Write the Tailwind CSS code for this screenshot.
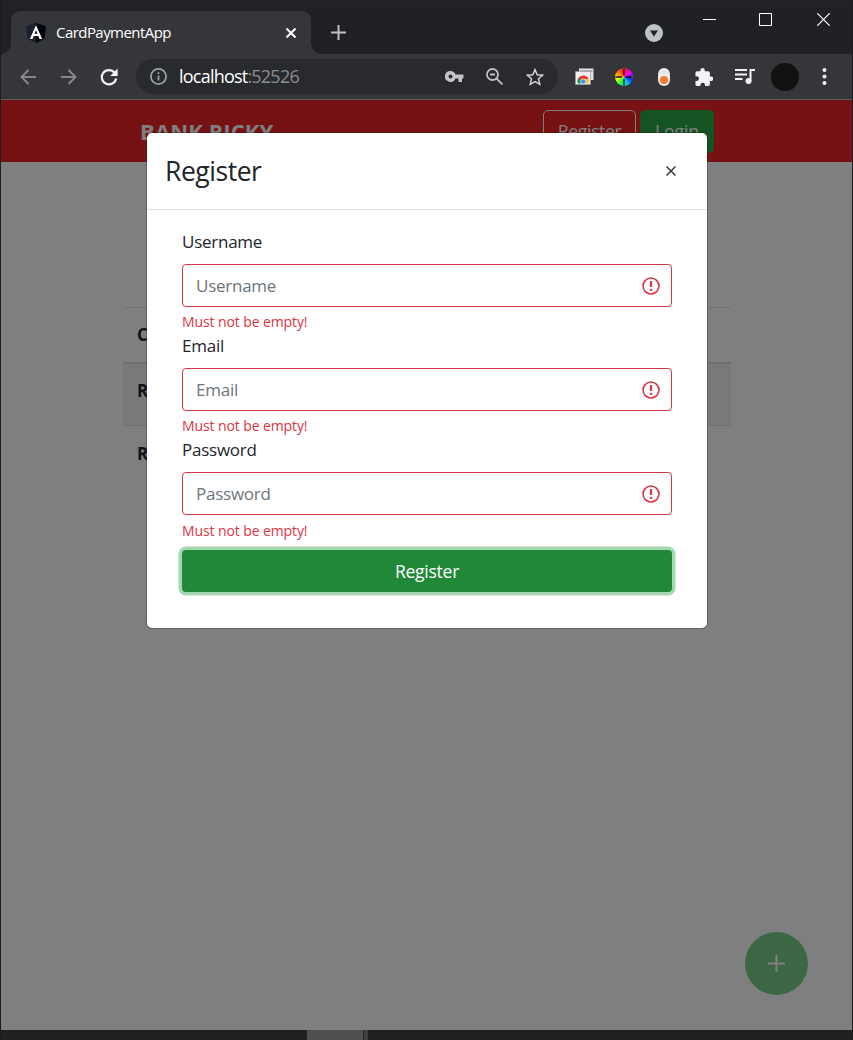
<!DOCTYPE html>
<html lang="en">
<head>
<meta charset="utf-8">
<title>CardPaymentApp</title>
<script src="https://cdn.jsdelivr.net/npm/@tailwindcss/browser@4"></script>
</head>
<body class="w-[853px] h-[1040px] overflow-hidden bg-[#202124] font-['Open_Sans',sans-serif]">
<div class="flex flex-col h-[1040px] w-[853px] border-x border-[#1b1c1e]">
  <!-- Tab strip -->
  <header class="flex h-[54px] shrink-0 border-t border-[#252624] bg-[#202124]">
    <div class="flex items-end w-[10px]"><div class="size-[10px] bg-[radial-gradient(circle_at_0_0,#202124_9.5px,#35363a_10px)]"></div></div>
    <div class="mt-[10px] flex h-[43px] w-[300px] items-center rounded-t-[9px] bg-[#35363a] pl-[15px] pr-[15px]">
      <svg class="size-5 shrink-0" viewBox="0 0 20 20"><path d="M10 0 20 3.3 18.4 16 10 20 1.6 16 0 3.3Z" fill="#1d2030"/><path d="M10 0 20 3.3 18.4 16 10 20Z" fill="#05060c"/><path fill-rule="evenodd" d="M10 2.2 3.800 16h2.700l1.200-3.100h4.600L13.500 16h2.700ZM10 7l1.500 3.700h-3Z" fill="#fff"/></svg>
      <span class="ml-[10px] grow text-[15px] tracking-[-0.55px] text-white">CardPaymentApp</span>
      <svg class="size-[10px]" viewBox="0 0 10 10" stroke="#fff" stroke-width="2"><path d="M.5.5l9 9M9.500.5l-9 9"/></svg>
    </div>
    <div class="flex items-end w-[10px]"><div class="size-[10px] bg-[radial-gradient(circle_at_100%_0,#202124_9.5px,#35363a_10px)]"></div></div>
    <svg class="ml-[10px] mt-[24px] size-[15px]" viewBox="0 0 15 15" stroke="#bdc1c6" stroke-width="2"><path d="M7.500 0v15M0 7.500h15"/></svg>
    <div class="grow"></div>
    <svg class="mt-[23px] size-[18px]" viewBox="0 0 18 18"><circle cx="9" cy="9" r="9" fill="#bdc1c6"/><path d="M5 6.500h8L9 12.500Z" fill="#202124"/></svg>
    <svg class="ml-[40px] mt-[12px] size-[13px]" viewBox="0 0 13 13" stroke="#fff"><path d="M0 6.500h13"/></svg>
    <svg class="ml-[43px] mt-[12px] size-[13px]" viewBox="0 0 13 13" stroke="#fff" fill="none"><path d="M.5.5h12v12H.5z"/></svg>
    <svg class="ml-[45px] mr-[22px] mt-[12px] size-[13px]" viewBox="0 0 13 13" stroke="#fff" stroke-width="1.200"><path d="M.3.3l12.400 12.400M12.700.3.3 12.700"/></svg>
  </header>
  <!-- Toolbar -->
  <div class="flex h-[46px] shrink-0 items-center border-b border-[#5c5d61] bg-[#35363a]">
    <svg class="ml-[19px] size-4" viewBox="0 0 16 16" fill="none" stroke="#85878b" stroke-width="2"><path d="M16 8H1.500M8.500 1 1.500 8l7 7"/></svg>
    <svg class="ml-[25px] size-4" viewBox="0 0 16 16" fill="none" stroke="#85878b" stroke-width="2"><path d="M0 8h14.500M7.500 1l7 7-7 7"/></svg>
    <svg class="ml-[23px] size-[18px]" viewBox="0 0 18 18"><path d="M14.600 4.700A7.200 7.200 0 1 0 16.100 10.500" fill="none" stroke="#f1f3f4" stroke-width="2.200"/><path d="M17.600.6v7.400h-7.400Z" fill="#f1f3f4"/></svg>
    <div class="ml-[18px] flex h-[35px] w-[422px] items-center rounded-full bg-[#292a2d] pl-[14px] pr-[14px]">
      <svg class="size-[17px]" viewBox="0 0 17 17" fill="none" stroke="#9aa0a6" stroke-width="1.700"><circle cx="8.500" cy="8.500" r="7.600"/><path d="M8.500 7.500v5M8.500 4.300V6"/></svg>
      <span class="ml-[12px] grow text-[18px] tracking-[-0.78px] text-[#8a8d91]"><span class="text-white">localhost</span>:52526</span>
      <svg class="w-[19px] h-[11px]" viewBox="0 0 19 11"><path fill-rule="evenodd" d="M5.500 0a5.500 5.500 0 1 0 5 7.500h3V11h3.500V7.500h1.500v-4h-8A5.500 5.500 0 0 0 5.500 0Zm0 3.500a2 2 0 1 1 0 4 2 2 0 0 1 0-4Z" fill="#c2c4c7"/></svg>
      <svg class="ml-[22px] size-[17px]" viewBox="0 0 17 17" fill="none" stroke="#bdbfc2" stroke-width="1.800"><circle cx="6.500" cy="6.500" r="5.500"/><path d="M4 6.500h5M10.500 10.500l6 6"/></svg>
      <svg class="ml-[23px] size-[18px]" viewBox="0 0 18 18" fill="none" stroke="#d0d2d5" stroke-width="1.500"><path d="M9 1.600 11.200 6.700l5.400.5-4.100 3.600 1.300 5.500L9 13.500l-4.800 2.800 1.300-5.500L1.400 7.200l5.400-.5Z"/></svg>
    </div>
    <svg class="ml-[17px] w-[19px] h-[17px]" viewBox="0 0 19 17"><path d="M4 .5h14.500V12H4z" fill="#e2e2e2"/><path d="M5 2.500h12.500v1H5z" fill="#777"/><path d="M.5 3.500h15v13H.5z" fill="#eee" stroke="#999" stroke-width=".7"/><path d="M3 15.500a5.200 5.200 0 0 1 1.500-6.500L8 12v3.500Z" fill="#189c52"/><path d="M13.300 15.500a5.200 5.200 0 0 0-.5-6L8 11v4.500Z" fill="#fbc52d"/><path d="M3.500 11a5.200 5.200 0 0 1 9.800 0H8l-2 2Z" fill="#df3b31"/><circle cx="8.300" cy="13.500" r="2.600" fill="#4387ee" stroke="#fff" stroke-width=".7"/></svg>
    <div class="relative ml-[20px] size-[20px]">
      <div class="m-px size-[18px] rounded-full bg-[conic-gradient(#f03,#f0f,#22f,#0cf,#0f4,#ef0,#f70,#f03)]"></div>
      <svg class="absolute inset-0 size-[20px]" viewBox="0 0 20 20"><path d="M10 0v8M10 12v8M0 10h8M12 10h8" stroke="#111" stroke-width="1.500"/><path d="M10 .5v2M10 17.500v2M.5 10h2M17.500 10h2" stroke="#bbb" stroke-width=".7"/></svg>
    </div>
    <div class="ml-[24px] flex h-[18px] w-[12px] items-end justify-center rounded-full bg-[#e9e9e9] pb-[2px]"><div class="size-[8px] rounded-full bg-[#f57c2b]"></div></div>
    <svg class="ml-[25px] size-[18px]" viewBox="0 0 19 19"><path d="M17 9h-1.300V5.300c0-1-.8-1.800-1.800-1.800H10.300V2.300a2.300 2.300 0 0 0-4.600 0v1.200H2.200C1.200 3.500.5 4.300.5 5.300v3.400h1.200a2.500 2.500 0 0 1 0 5H.5v3.500c0 1 .7 1.800 1.700 1.800h3.500v-1.300a2.500 2.500 0 0 1 4.900 0V19h3.300c1 0 1.800-.8 1.800-1.800v-3.600H17A2.300 2.300 0 0 0 17 9Z" fill="#f1f3f4"/></svg>
    <svg class="ml-[22px] w-[20px] h-[17px]" viewBox="0 0 20 17" fill="none" stroke="#f1f3f4" stroke-width="2"><path d="M0 2h12M0 6.500h12M0 11h7.500M15.500 13V2H20"/><circle cx="13.500" cy="13" r="3" fill="#f1f3f4" stroke="none"/></svg>
    <div class="ml-[16px] size-[28px] rounded-full bg-[#111]"></div>
    <svg class="ml-[23px] w-[5px] h-[17px]" viewBox="0 0 5 17" fill="#f1f3f4"><circle cx="2.500" cy="2" r="2"/><circle cx="2.500" cy="8.500" r="2"/><circle cx="2.500" cy="15" r="2"/></svg>
  </div>
  <!-- Page -->
  <main class="relative h-[930px] shrink-0 bg-white text-[#212529]">
    <nav class="flex h-[62px] items-start bg-[#ec2428] pl-[139px] pr-[138px] pt-[10px]">
      <div class="grow pt-[3px] text-[22px] leading-[36px] font-bold tracking-[0.1px] text-white">BANK RICKY</div>
      <button class="h-[43px] w-[93px] rounded-[5px] border border-white text-[17.600px] tracking-[-0.35px] text-white">Register</button>
      <button class="ml-[4px] h-[43px] w-[74px] rounded-[5px] bg-[#28a745] text-[17.600px] tracking-[-0.1px] text-white">Login</button>
    </nav>
    <div class="ml-[122px] mt-[145px] w-[608px] text-[17px] font-bold">
      <div class="flex h-[55px] items-center border-t border-[#dee2e6] pl-[14px]">C</div>
      <div class="flex h-[64px] items-center border-t-2 border-b border-[#dee2e6] bg-[#f2f2f2] pl-[14px] pb-[8px]">R</div>
      <div class="flex h-[55px] items-center pl-[14px]">R</div>
    </div>
    <div class="absolute left-[744px] top-[832px] flex size-[63px] items-center justify-center rounded-full bg-[#78ce88]">
      <svg class="size-[17px]" viewBox="0 0 17 17" stroke="#fff" stroke-width="2"><path d="M8.500 0v17M0 8.500h17"/></svg>
    </div>
    <div class="absolute inset-0 bg-black/50"></div>
    <!-- Register dialog -->
    <section class="absolute left-[146px] top-[33px] h-[495px] w-[560px] rounded-[5px] bg-white shadow-[0_0_0_1px_rgba(0,0,0,0.22)]">
      <div class="flex h-[77px] items-center border-b border-[#dee2e6] pl-[18px] pr-[31px]">
        <h4 class="grow pt-[2px] text-[26.500px] font-medium tracking-[-0.45px] text-[#212529]">Register</h4>
        <svg class="size-[10px]" viewBox="0 0 10 10" stroke="#343a40" stroke-width="1.500"><path d="M.5.5l9 9M9.500.5l-9 9"/></svg>
      </div>
      <form class="px-[35px] pt-[18px]">
        <div class="h-[104px]">
          <label class="block h-[36px] text-[17px] leading-[28px] tracking-[-0.25px]">Username</label>
          <div class="flex h-[43px] items-center rounded-[4px] border border-[#dc3545] pl-[13px] pr-[11px] text-[17px] tracking-[-0.25px] text-[#6c757d]"><span class="grow">Username</span><svg class="size-[18px]" viewBox="0 0 17 17" fill="none" stroke="#dc3545"><circle cx="8.500" cy="8.500" r="7.500" stroke-width="1.500"/><path d="M8.500 3.800v5.700M8.500 11.300v2" stroke-width="2"/></svg></div>
          <div class="pt-[4px] text-[14px] leading-[21px] tracking-[-0.1px] text-[#dc3545]">Must not be empty!</div>
        </div>
        <div class="h-[104px]">
          <label class="block h-[36px] text-[17px] leading-[28px] tracking-[-0.25px]">Email</label>
          <div class="flex h-[43px] items-center rounded-[4px] border border-[#dc3545] pl-[13px] pr-[11px] text-[17px] tracking-[-0.25px] text-[#6c757d]"><span class="grow">Email</span><svg class="size-[18px]" viewBox="0 0 17 17" fill="none" stroke="#dc3545"><circle cx="8.500" cy="8.500" r="7.500" stroke-width="1.500"/><path d="M8.500 3.800v5.700M8.500 11.300v2" stroke-width="2"/></svg></div>
          <div class="pt-[4px] text-[14px] leading-[21px] tracking-[-0.1px] text-[#dc3545]">Must not be empty!</div>
        </div>
        <div class="h-[106px]">
          <label class="block h-[36px] text-[17px] leading-[28px] tracking-[-0.25px]">Password</label>
          <div class="flex h-[43px] items-center rounded-[4px] border border-[#dc3545] pl-[13px] pr-[11px] text-[17px] tracking-[-0.25px] text-[#6c757d]"><span class="grow">Password</span><svg class="size-[18px]" viewBox="0 0 17 17" fill="none" stroke="#dc3545"><circle cx="8.500" cy="8.500" r="7.500" stroke-width="1.500"/><path d="M8.500 3.800v5.700M8.500 11.300v2" stroke-width="2"/></svg></div>
          <div class="pt-[5px] text-[14px] leading-[21px] tracking-[-0.1px] text-[#dc3545]">Must not be empty!</div>
        </div>
        <button type="button" class="mt-[8px] block h-[42px] w-full rounded-[4px] bg-[#218838] text-[17.600px] tracking-[-0.300px] text-white shadow-[0_0_0_3.500px_#a3d8b0]">Register</button>
      </form>
    </section>
  </main>
  <!-- Strip below the window -->
  <footer class="flex h-[10px] shrink-0 bg-[#202120]"><div class="ml-[306px] w-[56px] bg-[#505050]"></div><div class="w-px bg-[#222]"></div><div class="w-[4px] bg-[#404040]"></div></footer>
</div>
</body>
</html>
